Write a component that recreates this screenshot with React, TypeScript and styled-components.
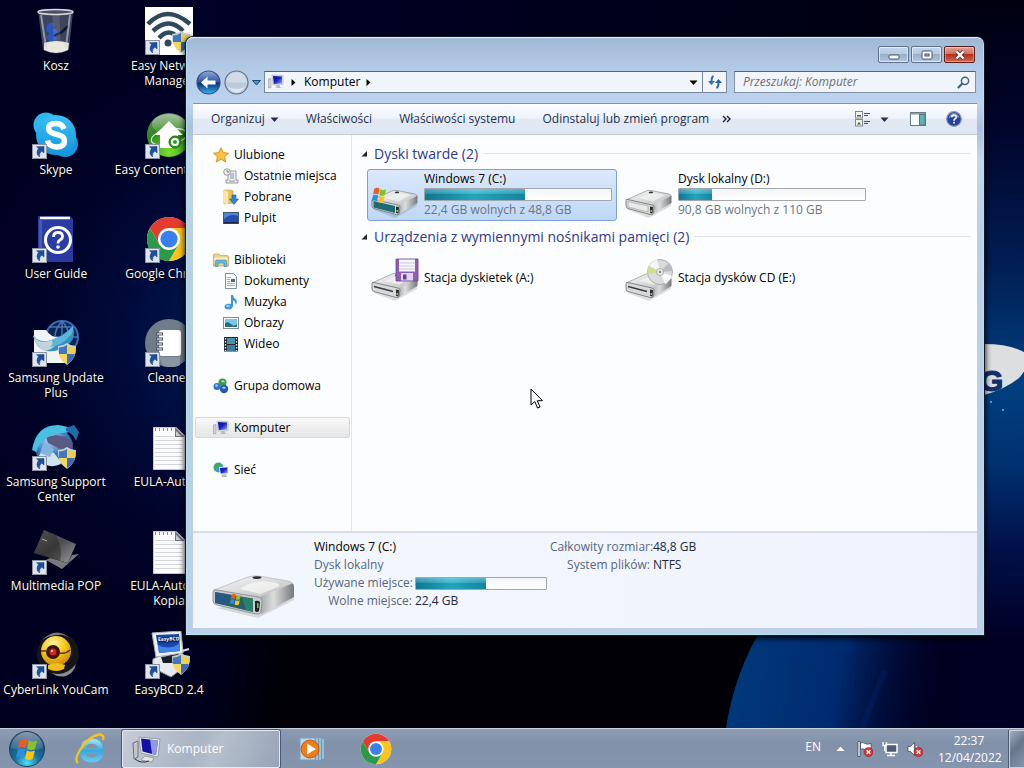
import React from 'react';
import styled, { createGlobalStyle } from 'styled-components';

const GlobalStyle = createGlobalStyle`
  * { box-sizing: border-box; }
  html, body { margin: 0; height: 100%; }
  body {
    font-family: "Segoe UI", "Open Sans", "Noto Sans", sans-serif;
    font-size: 12px;
    line-height: 16px;
    color: #000;
    background: #00001e;
    overflow: hidden;
  }
  #root { height: 100%; }
  button, input { font: inherit; color: inherit; padding: 0; margin: 0; border: 0; background: none; }
  a { color: inherit; text-decoration: none; }
  ul, dl, dd, h1, h2 { margin: 0; padding: 0; font-weight: 400; list-style: none; }
  svg { display: block; flex: none; }
`;

/* ---------- shell ---------- */

const Screen = styled.div`
  display: flex;
  flex-direction: column;
  height: 100vh;
`;

const Desktop = styled.main`
  position: relative;
  flex: 1;
  min-height: 0;
  overflow: hidden;
`;

const Backdrop = styled.div`
  position: absolute;
  inset: 0;
  svg { width: 100%; height: 100%; }
`;

const IconColumns = styled.ul`
  position: relative;
  display: grid;
  grid-auto-flow: column;
  grid-template-rows: repeat(7, 104px);
  grid-auto-columns: 112px;
  column-gap: 1px;
  width: max-content;
  padding-top: 7px;
`;

const Shortcut = styled.button`
  position: relative;
  display: flex;
  flex-direction: column;
  align-items: center;
  gap: 3px;
  width: 100%;
  color: #fff;
  text-align: center;
  line-height: 15px;
  white-space: nowrap;
  text-shadow: 0 1px 2px #000, 0 0 2px #000;
  span { display: block; }
`;

/* ---------- explorer window ---------- */

const Window = styled.section`
  position: absolute;
  top: 37px;
  left: 186px;
  right: 40px;
  bottom: 93px;
  display: flex;
  flex-direction: column;
  padding: 0 6px 6px;
  border: 1px solid #b4e2f2;
  border-top-color: #e9f1f8;
  border-radius: 7px 7px 0 0;
  background: linear-gradient(#a1b9d4, #b3cae6 30px, #bdd3ee 66px, #a9bfdc 90px, #c3d6ea 120px, #b9cfe6 200px, #bcd1e8);
  box-shadow: 0 0 0 1px #11182a, 0 2px 6px 1px #000;
`;

const TitleBar = styled.header`
  display: flex;
  justify-content: flex-end;
  gap: 2px;
  height: 33px;
  padding: 8px 2px 0 0;
`;

const CaptionButton = styled.button<{ $close?: boolean }>`
  display: grid;
  place-items: center;
  width: 31px;
  height: 17px;
  border: 1px solid ${p => (p.$close ? '#5b1c1c' : '#5c6f8c')};
  border-radius: 2px;
  box-shadow: inset 0 0 0 1px rgba(255, 255, 255, ${p => (p.$close ? 0.35 : 0.6)});
  background: ${p =>
    p.$close
      ? 'linear-gradient(#e2a396, #cf6c5b 50%, #b6301c 50%, #d0694c)'
      : 'linear-gradient(#c5d6ea, #b5c9e1 50%, #99b0cd 50%, #b1c8e2)'};
`;

const NavBar = styled.div`
  display: flex;
  align-items: center;
  height: 22px;
  margin-bottom: 10px;
`;

const RoundButton = styled.button`
  width: 25px;
  height: 25px;
  margin-left: 3px;
`;

const HistoryButton = styled.button`
  width: 15px;
  display: grid;
  place-items: center;
`;

const AddressBar = styled.div`
  flex: 1;
  display: flex;
  align-items: center;
  height: 22px;
  padding-left: 3px;
  border: 1px solid #7488a3;
  border-top-color: #4f6079;
  background: #f1f5fb;
`;

const Crumb = styled.button`
  margin: 0 4px 0 2px;
`;

const Spacer = styled.div`
  flex: 1;
`;

const BarButton = styled.button<{ $divided?: boolean }>`
  display: grid;
  place-items: center;
  width: ${p => (p.$divided ? 24 : 18)}px;
  height: 20px;
  border-left: ${p => (p.$divided ? '1px solid #7488a3' : '0')};
`;

const SearchBox = styled.label`
  display: flex;
  align-items: center;
  width: 242px;
  height: 22px;
  margin: 0 1px 0 7px;
  padding: 0 5px 0 8px;
  border: 1px solid #7f93ad;
  border-top-color: #4f6079;
  background: #f1f5fb;
  input {
    flex: 1;
    min-width: 0;
    outline: 0;
    &::placeholder { color: #6d6f74; font-style: italic; opacity: 1; }
  }
`;

const Client = styled.div`
  flex: 1;
  min-height: 0;
  display: flex;
  flex-direction: column;
  border-top: 1px solid #7b92b0;
  background: #fcfdfe;
`;

const CommandBar = styled.div`
  display: flex;
  align-items: center;
  height: 31px;
  flex: none;
  padding: 0 15px 1px 18px;
  color: #22314d;
  border-top: 1px solid #fff;
  border-bottom: 1px solid #c0cbdb;
  background: linear-gradient(#fafcff, #eef3fb 45%, #e2e9f5 50%, #dfe7f4);
`;

const Command = styled.button`
  display: flex;
  align-items: center;
  gap: 5px;
  margin-right: 27px;
  white-space: nowrap;
`;

const OverflowButton = styled.button`
  display: grid;
  place-items: center;
  width: 16px;
  height: 24px;
  margin-left: -18px;
`;

const ToolButton = styled.button`
  display: grid;
  place-items: center;
  height: 24px;
  min-width: 16px;
`;

const ToolGroup = styled.div`
  display: flex;
  align-items: center;
  gap: 18px;
  > button + button { margin-left: 2px; }
`;

const SplitTool = styled.div`
  display: flex;
  gap: 5px;
`;

const Panes = styled.div`
  flex: 1;
  min-height: 0;
  display: flex;
`;

const NavPane = styled.nav`
  flex: none;
  width: 159px;
  padding: 9px 1px 0 2px;
  border-right: 1px solid #dfe7f1;
`;

const NavGroup = styled.ul`
  margin-bottom: 21px;
`;

const NavItem = styled.a<{ $child?: boolean; $selected?: boolean }>`
  display: flex;
  align-items: center;
  gap: 5px;
  height: 21px;
  padding-left: ${p => (p.$child ? 27 : 17)}px;
  white-space: nowrap;
  border: 1px solid ${p => (p.$selected ? '#d9d9d9' : 'transparent')};
  border-radius: 2px;
  background: ${p => (p.$selected ? 'linear-gradient(#f8f8f8, #e6e6e7)' : 'none')};
`;

const FileList = styled.div`
  flex: 1;
  min-width: 0;
  padding: 4px 7px 0 8px;
`;

const GroupHeading = styled.h2`
  display: flex;
  align-items: center;
  gap: 5px;
  height: 30px;
  padding-bottom: 1px;
  font-size: 14px;
  line-height: 20px;
  color: #2f3a8c;
  white-space: nowrap;
  svg { color: #222; }
  &::after {
    content: "";
    flex: 1;
    height: 1px;
    background: #e0e3ea;
  }
`;

const Tiles = styled.div`
  display: flex;
  flex-wrap: wrap;
  gap: 1px 4px;
  padding: 0 0 1px 7px;
`;

const Tile = styled.button<{ $selected?: boolean }>`
  display: flex;
  align-items: center;
  gap: 5px;
  width: 250px;
  height: 52px;
  padding: 0 4px 1px 3px;
  text-align: left;
  border: 1px solid ${p => (p.$selected ? '#7da2ce' : 'transparent')};
  border-radius: 3px;
  background: ${p => (p.$selected ? 'linear-gradient(#dbe9fb, #bfd7f6)' : 'none')};
`;

const TileText = styled.span`
  flex: 1;
  display: flex;
  flex-direction: column;
  gap: 1px;
  white-space: nowrap;
  small { font-size: 12px; color: #6d7580; }
`;

const Gauge = styled.span`
  display: block;
  width: 100%;
  height: 13px;
  border: 1px solid #a2a6ad;
  border-radius: 1px;
  background: linear-gradient(#f4f5f6, #fff);
  i {
    display: block;
    height: 100%;
    background: linear-gradient(rgba(255, 255, 255, 0.3), rgba(255, 255, 255, 0.05) 50%, rgba(0, 60, 80, 0.15) 50%, rgba(0, 40, 60, 0.1)),
      linear-gradient(90deg, #12809c, #2bb4cc 50%, #1590ad);
  }
`;

const DetailsPane = styled.footer`
  flex: none;
  display: flex;
  height: 97px;
  padding: 5px 20px 0 19px;
  gap: 18px;
  border-top: 2px solid #dadde3;
  background: linear-gradient(90deg, #f3f7fd, #f0f3fd);
  svg { margin-top: 32px; }
`;

const Facts = styled.dl`
  display: grid;
  grid-template-columns: 98px 132px 100px auto;
  grid-auto-rows: 18px;
  column-gap: 3px;
  align-items: center;
  align-content: start;
  white-space: nowrap;
  dt { color: #59667b; text-align: right; }
  dd { color: #1b2a44; }
`;

const Subject = styled.dd<{ $dim?: boolean }>`
  grid-column: span 2;
  && { color: ${p => (p.$dim ? '#59667b' : '#000')}; }
`;

const Filler = styled.div`
  grid-column: span 2;
`;

const Cursor = styled.div`
  position: absolute;
  left: 530px;
  top: 388px;
`;

/* ---------- taskbar ---------- */

const Taskbar = styled.footer`
  display: flex;
  align-items: center;
  height: 40px;
  flex: none;
  color: #fff;
  border-top: 1px solid #c3cddb;
  background: linear-gradient(#8e9db2, #8091a9 40%, #8495ad);
  box-shadow: 0 -1px 0 #10151f;
`;

const StartButton = styled.button`
  width: 54px;
  margin-right: 4px;
  display: grid;
  place-items: center;
`;

const Pinned = styled.button`
  width: 64px;
  display: grid;
  place-items: center;
`;

const TaskButton = styled.button`
  display: flex;
  align-items: center;
  gap: 6px;
  width: 158px;
  height: 38px;
  padding-left: 8px;
  border: 1px solid #e4e9ef;
  border-radius: 2px;
  box-shadow: 0 0 0 1px #4b586b;
  background: linear-gradient(115deg, #c6cdd8, #a9b4c4 45%, #b5bfcd 60%, #97a4b7);
`;

const Tray = styled.div`
  display: flex;
  align-items: center;
  gap: 9px;
`;

const TrayButton = styled.button`
  display: grid;
  place-items: center;
  min-width: 16px;
`;

const Language = styled.button`
  margin-right: 2px;
  padding-bottom: 4px;
`;

const Clock = styled.button`
  width: 62px;
  margin-left: 6px;
  line-height: 17px;
  text-align: center;
  white-space: nowrap;
  span { display: block; }
`;

const ShowDesktop = styled.button`
  width: 15px;
  height: 38px;
  border: 1px solid #c7d0dc;
  border-right: 0;
  box-shadow: -1px 0 0 #4b586b;
  background: linear-gradient(135deg, #a0adbd, #66758a 45%, #8695aa);
`;

/* ---------- drawings ---------- */

const Defs = () => (
  <svg width="0" height="0" style={{ position: 'absolute' }} aria-hidden="true">
    <defs>
      <linearGradient id="metal" x1="0" y1="0" x2="1" y2="1">
        <stop offset="0" stopColor="#fafafa" />
        <stop offset="1" stopColor="#b9babc" />
      </linearGradient>
      <linearGradient id="metalSide" x1="0" y1="0" x2="1" y2="0">
        <stop offset="0" stopColor="#a5a6a8" />
        <stop offset="0.4" stopColor="#dcdddd" />
        <stop offset="1" stopColor="#77787b" />
      </linearGradient>
      <linearGradient id="screenBlue" x1="0" y1="0" x2="1" y2="1">
        <stop offset="0" stopColor="#0a0a90" />
        <stop offset="0.5" stopColor="#1b22c4" />
        <stop offset="1" stopColor="#8fb2f0" />
      </linearGradient>
      <radialGradient id="orb" cx="0.5" cy="0.9" r="0.9">
        <stop offset="0" stopColor="#4be0f5" />
        <stop offset="0.4" stopColor="#15709c" />
        <stop offset="1" stopColor="#1b3e63" />
      </radialGradient>
      <linearGradient id="gloss" x1="0" y1="0" x2="0" y2="1">
        <stop offset="0" stopColor="#fff" stopOpacity="0.85" />
        <stop offset="1" stopColor="#fff" stopOpacity="0.15" />
      </linearGradient>
      <linearGradient id="backBlue" x1="0" y1="0" x2="0" y2="1">
        <stop offset="0" stopColor="#8fa9dc" />
        <stop offset="0.48" stopColor="#2f55ac" />
        <stop offset="0.52" stopColor="#0c2a7c" />
        <stop offset="1" stopColor="#2fb9ee" />
      </linearGradient>
      <linearGradient id="skyBall" x1="0" y1="0" x2="0" y2="1">
        <stop offset="0" stopColor="#39c0f4" />
        <stop offset="1" stopColor="#1596dd" />
      </linearGradient>
      <radialGradient id="greenBall" cx="0.5" cy="0.9" r="0.9">
        <stop offset="0" stopColor="#7be02c" />
        <stop offset="0.6" stopColor="#2f8a1c" />
        <stop offset="1" stopColor="#5c8a52" />
      </radialGradient>
      <radialGradient id="globe" cx="0.4" cy="0.3" r="0.8">
        <stop offset="0" stopColor="#b5dbf4" />
        <stop offset="0.5" stopColor="#3f7dc2" />
        <stop offset="1" stopColor="#1c3c7c" />
      </radialGradient>
      <radialGradient id="yolk" cx="0.4" cy="0.25" r="0.8">
        <stop offset="0" stopColor="#fff3a0" />
        <stop offset="0.5" stopColor="#f8c81c" />
        <stop offset="1" stopColor="#c67f05" />
      </radialGradient>
      <linearGradient id="laptop" x1="0" y1="0" x2="1" y2="1">
        <stop offset="0" stopColor="#7b7b7b" />
        <stop offset="0.5" stopColor="#4b4b4b" />
        <stop offset="1" stopColor="#9a9a9a" />
      </linearGradient>
      <linearGradient id="fold" x1="0" y1="0" x2="1" y2="0">
        <stop offset="0" stopColor="#f6dd85" />
        <stop offset="1" stopColor="#e2b545" />
      </linearGradient>
      <linearGradient id="ie" x1="0" y1="0" x2="0" y2="1">
        <stop offset="0" stopColor="#8fe0f8" />
        <stop offset="0.5" stopColor="#35a9e0" />
        <stop offset="1" stopColor="#5cc8f0" />
      </linearGradient>
    </defs>
  </svg>
);

const Wallpaper = () => (
  <svg viewBox="0 0 1024 728" preserveAspectRatio="xMidYMid slice" aria-hidden="true">
    <defs>
      <radialGradient id="wpLeft" gradientUnits="userSpaceOnUse" cx="260" cy="340" r="330">
        <stop offset="0" stopColor="#02205a" />
        <stop offset="0.4" stopColor="#000b3c" />
        <stop offset="1" stopColor="#000022" stopOpacity="0" />
      </radialGradient>
      <linearGradient id="wpRight" gradientUnits="userSpaceOnUse" x1="0" y1="0" x2="0" y2="640">
        <stop offset="0" stopColor="#00000f" />
        <stop offset="0.2" stopColor="#00052c" />
        <stop offset="0.4" stopColor="#001c50" />
        <stop offset="0.6" stopColor="#00407f" />
        <stop offset="0.72" stopColor="#003272" />
        <stop offset="0.86" stopColor="#001048" />
        <stop offset="1" stopColor="#000024" />
      </linearGradient>
      <linearGradient id="wpArc" gradientUnits="userSpaceOnUse" x1="730" y1="650" x2="950" y2="690">
        <stop offset="0" stopColor="#003a7c" />
        <stop offset="0.5" stopColor="#002a70" />
        <stop offset="1" stopColor="#000028" stopOpacity="0" />
      </linearGradient>
      <linearGradient id="wpDark" gradientUnits="userSpaceOnUse" x1="190" y1="640" x2="290" y2="660">
        <stop offset="0" stopColor="#000010" stopOpacity="0" />
        <stop offset="1" stopColor="#000006" />
      </linearGradient>
      <linearGradient id="wpTop" gradientUnits="userSpaceOnUse" x1="190" y1="0" x2="1024" y2="0">
        <stop offset="0" stopColor="#000028" />
        <stop offset="1" stopColor="#00000f" />
      </linearGradient>
    </defs>
    <rect width="1024" height="728" fill="#000020" />
    <rect width="1024" height="728" fill="url(#wpLeft)" />
    <rect x="190" width="834" height="60" fill="url(#wpTop)" />
    <rect x="180" y="600" width="640" height="128" fill="url(#wpDark)" />
    <rect x="960" width="64" height="728" fill="url(#wpRight)" />
    <path d="M780 600Q736 660 726 728H960V600Z" fill="url(#wpArc)" />
    <path d="M862 728L885 670" stroke="#0b3c9a" strokeWidth="6" opacity="0.15" fill="none" />
    <path d="M900 344H984Q1010 344 1024 352Q1032 362 1020 377Q1008 388 984 395H900Z" fill="#dcdee0" />
    <text x="980" y="391" fontFamily="Liberation Sans Narrow, Liberation Sans, sans-serif" fontWeight="700" fontSize="30" fill="#123068" stroke="#123068">G</text>
    <circle cx="991" cy="402" r="1" fill="#7fb4e8" />
    <circle cx="1003" cy="410" r="1" fill="#7fb4e8" />
  </svg>
);

const Shield = ({ x, y, s = 1 }: { x: number; y: number; s?: number }) => (
  <g transform={`translate(${x} ${y}) scale(${s})`}>
    <path d="M10 0Q14 3 19 3Q20 15 10 22Q0 15 1 3Q6 3 10 0Z" fill="#c9ced4" />
    <path d="M10 2V11H2Q2 7 2 4.500Q6 4.500 10 2Z" fill="#3f78c0" />
    <path d="M10 2V11H18Q18 7 18 4.500Q14 4.500 10 2Z" fill="#f2cf4a" />
    <path d="M10 11H2.200Q3 17 10 21Z" fill="#f6d95c" />
    <path d="M10 11H17.800Q17 17 10 21Z" fill="#3a6db4" />
  </g>
);

const LinkArrow = () => (
  <g transform="translate(0 33)">
    <rect x="0.500" y="0.500" width="14" height="14" fill="#dde4ee" stroke="#8d949e" />
    <path d="M12 2.500V9L9.800 7Q7 9 7.500 13Q3 9.500 6.500 4.600L4.500 2.800Z" fill="#1d4f9c" stroke="#123a7c" strokeWidth="0.500" />
  </g>
);

const ChromeMark = () => (
  <g>
    <circle cx="24" cy="24" r="22" fill="#fff" />
    <path d="M24 24L4.950 13A22 22 0 0 1 43.050 13H24Z" fill="#e33b2e" />
    <path d="M43.050 13A22 22 0 0 1 24 46L33.500 29.500L24 13Z" fill="#fcc51b" />
    <path d="M24 46A22 22 0 0 1 4.950 13L14.500 29.500L33.500 29.500Z" fill="#2a9a48" />
    <path d="M4.950 13L14.500 29.500L24 13Z" fill="#e33b2e" />
    <circle cx="24" cy="24" r="11" fill="#fff" />
    <circle cx="24" cy="24" r="8.600" fill="#3a7ff0" />
  </g>
);

const Flag = ({ x, y, s }: { x: number; y: number; s: number }) => (
  <g transform={`translate(${x} ${y}) scale(${s})`}>
    <path d="M3 1Q7 -1.500 10 0.800L8.500 8.500Q5 6.500 1.500 8.500Z" fill="#ee5a24" />
    <path d="M11.200 1.500Q15 3.500 19 1.500L17.200 9.200Q13.500 11 9.800 9.200Z" fill="#8ac02c" />
    <path d="M1.200 10Q5 8 8.200 10L6.600 17.500Q3 15.500 -0.500 17.500Z" fill="#2c8ee0" />
    <path d="M9.500 10.700Q13 12.500 17 10.700L15 18.500Q11.500 20.200 7.900 18.500Z" fill="#fbc416" />
  </g>
);

const BinIcon = () => (
  <>
    <path d="M6 4Q24 0 41 4L37 43Q24 50 11 43Z" fill="#7c8496" opacity="0.5" />
    <path d="M12 36Q24 32 37 36L36 43Q24 49 12 43Z" fill="#e9e7de" />
    <path d="M15 18Q19 14 22 17L20 22Q25 21 26 25L23 28L25 32Q20 36 16 33L14 30L18 26Q12 25 15 18Z" fill="#2756c0" />
    <path d="M22 29L30 25L36 19" stroke="#0d1630" strokeWidth="2.500" fill="none" />
    <path d="M9 8L14 40M38 8L34 40" stroke="#c9d0dc" strokeWidth="2" opacity="0.6" />
    <path d="M24 8L25 34" stroke="#dfe4ee" strokeWidth="7" opacity="0.15" />
    <ellipse cx="23.500" cy="5" rx="17.500" ry="2.500" fill="#4a5163" stroke="#d7dce4" strokeWidth="1.500" />
  </>
);

const SkypeIcon = () => (
  <>
    <circle cx="14" cy="14" r="12.500" fill="#2fb6f0" />
    <circle cx="33" cy="33" r="13" fill="#1797dd" />
    <circle cx="24" cy="24" r="20" fill="url(#skyBall)" />
    <path d="M32 18Q30 12.500 24 12.500Q16.500 12.500 16.500 17.500Q16.500 21.500 24 23.200Q32.500 25 32.500 29.500Q32.500 36 24.500 36Q17 36 15.500 29.500" stroke="#fff" strokeWidth="5.500" fill="none" />
  </>
);

const GuideIcon = () => (
  <>
    <path d="M6 1H38L41 4V47H10L6 44Z" fill="#2a3ba4" />
    <path d="M8 3H38" stroke="#fff" strokeWidth="2.500" />
    <path d="M7 4H10V46L7 44Z" fill="#4558be" />
    <circle cx="26" cy="25" r="12.500" fill="none" stroke="#fff" strokeWidth="3" />
    <path d="M21.500 22Q21.500 17.500 26 17.500Q30.500 17.500 30.500 21.300Q30.500 24 27.500 25.300Q26 26 26 28.500" stroke="#fff" strokeWidth="2.800" fill="none" />
    <circle cx="26" cy="32" r="1.800" fill="#fff" />
  </>
);

const UpdateIcon = () => (
  <>
    <circle cx="30" cy="18" r="16" fill="#0b2350" stroke="#3b6bb4" strokeWidth="2" />
    <path d="M14 18H46M18 8H42M30 2V34M30 2Q16 18 30 34Q44 18 30 2" stroke="#4674b8" strokeWidth="1.500" fill="none" />
    <path d="M2 11H14Q20 20 30 18L34 26V44H2Z" fill="#f1f3f4" />
    <path d="M1 16Q8 26 22 20Q32 16 41 7Q44 18 38 24Q28 34 14 32Q4 30 1 16Z" fill="#2f92c0" />
    <path d="M1 16Q6 26 20 21L28 18Q26 28 14 32Q4 30 1 16Z" fill="#c3d3da" />
    <path d="M20 21Q32 18 41 7Q42 14 36 19Q30 26 18 28Q22 25 20 21Z" fill="#5cb6da" />
    <Shield x={25} y={24} />
  </>
);

const SupportIcon = () => (
  <>
    <circle cx="22" cy="24" r="19" fill="url(#globe)" />
    <path d="M14 14L24 12L34 14L41 20L38 28L30 27L24 24L16 20Z" fill="#5a5b82" />
    <path d="M6 36Q8 24 22 30L30 40Q18 48 6 36Z" fill="#cfe4f2" />
    <path d="M12 20L22 26L18 34L8 30Z" fill="#86b4e0" />
    <path d="M0 27Q4 2 26 2Q36 3 40 7Q38 10 30 10Q10 12 4 29Z" fill="#49bfe2" />
    <path d="M34 5L42 2L47 9L44 18Q41 10 34 8Z" fill="#1f6da6" />
    <Shield x={25} y={24} />
  </>
);

const LaptopIcon = () => (
  <>
    <path d="M12 3L44 17L36 36L2 26Z" fill="url(#laptop)" />
    <path d="M12 3L24 8Q31 22 28 34L2 26Z" fill="#1f1f1f" opacity="0.45" />
    <path d="M36 36L40 28L47 27L30 42L14 33L18 31Z" fill="#77797b" />
    <path d="M10 12L15 14" stroke="#b0b0b0" strokeWidth="1" />
  </>
);

const CamIcon = () => (
  <>
    <circle cx="26" cy="23" r="21" fill="#16161a" />
    <path d="M9 10Q24 -6 39 8Q32 3 26 4Q16 4 9 10Z" fill="#77797c" />
    <path d="M20 42Q34 46 44 33Q42 42 34 45Q26 47 20 42Z" fill="#8a8c90" />
    <circle cx="24" cy="20" r="15" fill="url(#yolk)" />
    <path d="M16 34Q24 30 33 34L32 38Q24 42 16 38Z" fill="#f0bb1c" />
    <path d="M9 20H14M28 22Q34 23 38 19" stroke="#5a3802" strokeWidth="1.500" fill="none" />
    <circle cx="21" cy="21" r="7" fill="#3a1509" />
    <circle cx="21" cy="21" r="3.500" fill="#d62222" />
    <circle cx="20" cy="20" r="1.200" fill="#ffb4a0" />
  </>
);

const WifiIcon = () => (
  <>
    <rect width="48" height="48" fill="#fff" />
    <path d="M3 17Q22 -3 45 17" stroke="#2c4a5c" strokeWidth="4.500" fill="none" />
    <path d="M8 24Q24 9 38 24" stroke="#2c4a5c" strokeWidth="4.500" fill="none" />
    <path d="M14 31Q24 20 33 31" stroke="#2c4a5c" strokeWidth="4.500" fill="none" />
    <circle cx="23" cy="36" r="3.500" fill="#2c4a5c" />
    <Shield x={26} y={24} />
  </>
);

const ShareIcon = () => (
  <>
    <circle cx="24" cy="24" r="22" fill="url(#greenBall)" />
    <ellipse cx="24" cy="13" rx="17" ry="10" fill="url(#gloss)" opacity="0.55" />
    <ellipse cx="24" cy="26" rx="18" ry="8" fill="none" stroke="#dff0d8" strokeWidth="1.200" transform="rotate(-12 24 26)" />
    <path d="M24 10L38 24H33V37H15V24H10Z" fill="#fff" />
    <circle cx="30" cy="31" r="6" fill="#2f9a1e" stroke="#1c6a12" strokeWidth="1" />
    <circle cx="30" cy="31" r="3" fill="none" stroke="#fff" strokeWidth="2" />
    <path d="M34 27L44 22" stroke="#256f18" strokeWidth="2.500" />
  </>
);

const CleanerIcon = () => (
  <>
    <circle cx="24" cy="24" r="24" fill="#6f7c8a" />
    <path d="M14 38L35 38L35 46Q28 50 18 47Z" fill="#8b96a2" />
    <rect x="14" y="11" width="22" height="26" rx="3" fill="#fff" />
    <path d="M11 15H18M11 20H18M11 25H18M11 30H18" stroke="#4c5763" strokeWidth="3" />
    <path d="M12 15H17M12 20H17M12 25H17M12 30H17" stroke="#fff" strokeWidth="1.200" />
  </>
);

const NoteIcon = () => (
  <>
    <path d="M8.500 4.500H31L40.500 13.500V46.500H8.500Z" fill="#fbfbfd" stroke="#c5c9cf" />
    <path d="M30 4V14H40Z" fill="#70767e" />
    <path d="M31 8V13H36Z" fill="#c9ced5" />
    <path d="M10 13.500H29M10 17.500H38M10 21.500H38M10 25.500H38M10 29.500H38M10 33.500H38M10 37.500H38M10 41.500H38" stroke="#d3d7dd" />
    <path d="M10 6.500H29" stroke="#8a9098" strokeWidth="3" strokeDasharray="1 3" />
  </>
);

const BcdIcon = () => (
  <>
    <path d="M8 28Q6 36 14 40L26 46L34 40L30 26L16 24Z" fill="#e7eaee" stroke="#8b9099" />
    <path d="M16 26L30 24V32H18Z" fill="#1a1d26" />
    <path d="M7 2L36 0L38 22L11 26Z" fill="#eef0f2" stroke="#aab0b8" />
    <path d="M11 4L34 3L35 20L14 22Z" fill="#1747b0" />
    <path d="M14 22L35 20L35 12Q24 20 13 14Z" fill="#3f86e6" />
    <text x="13" y="10" fontSize="5" fontWeight="700" fill="#fff" transform="rotate(-2 13 10)">EasyBCD</text>
    <path d="M37 20L44 18" stroke="#d6d9de" strokeWidth="2" />
    <Shield x={26} y={22} />
  </>
);

const Drive = ({ kind }: { kind: 'system' | 'plain' | 'floppy' | 'cd' }) => (
  <svg width="48" height="48" viewBox="0 0 48 48" aria-hidden="true">
    <path d="M3 39L24 47L46 35V31L3 35Z" fill="#000" opacity="0.12" />
    <path d="M1 29L21 20Q23 19 26 19.500L44 23Q47 24 46 26L27 36Z" fill="url(#metal)" stroke="#8f9194" strokeWidth="0.700" />
    <path d="M26 35L46 25Q47 25 46.500 27V32L28 43Z" fill="url(#metalSide)" />
    <path d="M1 29.500Q1 28 3 28.500L27 34Q29 34.500 29 36L28 43Q27 44 25 43.500L3 37.500Q1 37 1 35Z" fill="#d8d9da" stroke="#6c6e71" strokeWidth="0.800" />
    <path d="M14 27L27 21.500L40 24L28 30.500Z" fill="#fff" opacity="0.5" />
    <ellipse cx="26" cy="21.400" rx="2.200" ry="0.900" fill="#333" />
    {kind === 'floppy' || kind === 'cd' ? (
      <path d="M3 32.500L22 37.500" stroke="#3a3c3f" strokeWidth="1.600" />
    ) : kind === 'plain' ? (
      <path d="M3 30.500L23 35V41L3 36Z" fill="#e9eaea" stroke="#9b9da0" strokeWidth="0.600" />
    ) : (
      <path d="M2.500 30L24 35V42L2.500 36.500Z" fill="#1f6a74" />
    )}
    <path d="M25 35.500L28 36L27.500 42.500L25 42Z" fill="#2c2e30" />
    <rect x="25.500" y="39" width="1.500" height="2" fill="#5edb3a" />
    {kind === 'floppy' && (
      <g transform="translate(0 4)">
        <path d="M25 1H47V23H25Z" fill="#8e5fb4" stroke="#6a3f92" strokeWidth="0.800" />
        <rect x="28" y="1.500" width="16" height="12" fill="#f7f6fa" />
        <path d="M28 5H44M28 8H44M28 11H44" stroke="#cfc8da" />
        <rect x="30" y="15" width="12" height="7.500" fill="#ddd6e6" />
        <rect x="32" y="16.500" width="3.500" height="5" fill="#6a3f92" />
      </g>
    )}
    {kind === 'cd' && (
      <g transform="translate(0 4)">
        <circle cx="35" cy="14" r="12.500" fill="#d9dbdc" stroke="#9fa3a6" strokeWidth="0.800" />
        <path d="M35 14L24 8Q27 3 32 1.500Z" fill="#f5f7f7" />
        <path d="M35 14L22.500 16Q22 11 24 8Z" fill="#cfe08a" />
        <path d="M35 14L47 18Q44 24 40 26Z" fill="#fafafa" />
        <path d="M35 14L44 5Q47 9 47.500 13Z" fill="#b8bcbf" />
        <circle cx="35" cy="14" r="3.500" fill="#f6f6f6" stroke="#a6a9ac" />
        <circle cx="35" cy="14" r="1.400" fill="#8b8e91" />
      </g>
    )}
    {kind === 'system' && <Flag x={1} y={17} s={0.750} />}
  </svg>
);

const BigDrive = () => (
  <svg width="84" height="48" viewBox="0 0 84 48" aria-hidden="true">
    <path d="M4 38L46 48L82 30V26Z" fill="#000" opacity="0.12" />
    <path d="M2 20L36 7Q42 5 50 6.500L76 11Q81 12 81 15L50 28Z" fill="url(#metal)" stroke="#b4b6b8" strokeWidth="0.700" />
    <path d="M28 19Q40 9 62 12.500Q70 14 66 17L48 24Z" fill="#fff" opacity="0.6" />
    <path d="M48 27L80 13.500Q82 13.500 82 17V27L52 43Q48 45 48 42Z" fill="url(#metalSide)" />
    <path d="M1 22Q1 19 5 20L46 27Q50 28 50 31L49 42Q48 45 44 44L5 35Q1 34 1 31Z" fill="#c9cacb" stroke="#85878a" strokeWidth="0.800" />
    <path d="M3 22L41 28.500V42L3 33Z" fill="#22606e" />
    <path d="M3 22L18 24.500L12 35L3 33Z" fill="#2d4f9a" opacity="0.5" />
    <path d="M30 27L41 29V42L34 40Z" fill="#2f8f68" opacity="0.7" />
    <path d="M43 31Q46 30 48 32L47 41Q45 43 43 41Z" fill="#1d2224" />
    <rect x="45" y="33" width="1.500" height="5" fill="#5edb3a" />
    <ellipse cx="45" cy="7.600" rx="4.500" ry="1.400" fill="#2d2d2f" />
    <Flag x={18} y={24} s={0.580} />
  </svg>
);

const ComputerIcon = () => (
  <svg width="16" height="16" viewBox="0 0 16 16" aria-hidden="true">
    <path d="M0.500 5L3 4.500V13.500L0.500 14Z" fill="#d4d8dc" stroke="#83898f" strokeWidth="0.500" />
    <path d="M4 1L15 1.500V10.500L5 11Z" fill="#dfe3ea" stroke="#9da4ae" strokeWidth="0.500" />
    <path d="M5 2L14 2.500V9.500L5.800 10Z" fill="url(#screenBlue)" />
    <path d="M8.500 11H11.500L12 13L14 14H7L8.500 13Z" fill="#b5bac1" />
  </svg>
);

const TaskComputerIcon = () => (
  <svg width="30" height="30" viewBox="0 0 30 30" aria-hidden="true">
    <path d="M2 9L7 7V23L3 25Z" fill="#c3c7cc" stroke="#6c7178" />
    <path d="M8 3L29 5L27 23L10 19Z" fill="#e6e8ea" stroke="#8a8f96" strokeWidth="0.800" />
    <path d="M10 4.500L27 6.500L25 21L11.500 17.500Z" fill="#1310a8" />
    <path d="M19 5.500L27 6.500L25 21L21 19.800Z" fill="#b9c8f0" opacity="0.75" />
    <path d="M14 22L23 24L21 28L10 26Z" fill="#e3e5e7" stroke="#84888e" strokeWidth="0.700" />
    <path d="M4 25Q10 30 18 27" stroke="#2f3236" fill="none" />
  </svg>
);

const NavIcon = ({ name }: { name: string }) => {
  if (name === 'computer') return <ComputerIcon />;
  return (
    <svg width="16" height="16" viewBox="0 0 16 16" aria-hidden="true">
      {name === 'star' && (
        <path d="M8 0.800L10.200 5.600L15.500 6.200L11.600 9.700L12.700 15L8 12.300L3.300 15L4.400 9.700L0.500 6.200L5.800 5.600Z" fill="#fbc33a" stroke="#d98a1c" strokeWidth="0.900" />
      )}
      {name === 'recent' && (
        <>
          <path d="M5 3H13V12H15V15H3L3 12H5Z" fill="#eceef0" stroke="#8a9098" strokeWidth="0.900" />
          <path d="M7 6H11M7 8H11M7 10H11M6 13H12" stroke="#8f959c" />
          <circle cx="4" cy="4" r="3.300" fill="#f6f7f8" stroke="#8a9098" strokeWidth="0.900" />
          <path d="M4 2V4H6" stroke="#555" strokeWidth="0.800" fill="none" />
        </>
      )}
      {name === 'downloads' && (
        <>
          <path d="M1 1H8L10 2V14L1 15Z" fill="url(#fold)" stroke="#cf9f38" strokeWidth="0.600" />
          <path d="M1 1L5 3V15.500L1 14Z" fill="#f8e7a6" />
          <path d="M9 6H13V10H15.500L11 15.500L6.500 10H9Z" fill="#2f86d8" stroke="#1b5ca6" strokeWidth="0.600" />
        </>
      )}
      {name === 'desktop' && (
        <>
          <rect x="0.500" y="2.500" width="15" height="11" fill="#1f50b4" stroke="#47526b" />
          <path d="M1 9Q8 3 15 6V3H1Z" fill="#5b93e4" opacity="0.8" />
          <rect x="1" y="12" width="14" height="1.500" fill="#202a44" />
        </>
      )}
      {name === 'libraries' && (
        <>
          <path d="M0.500 3Q0.500 2 2 2H6L7 3.500H14Q15.500 3.500 15.500 5V14H0.500Z" fill="#ecd387" stroke="#c2a04c" strokeWidth="0.700" />
          <path d="M1.500 5.500H14.500V8H1.500Z" fill="#fbf5d6" />
          <path d="M3 8H13L14 14.500H11V11H5V14.500H2Z" fill="#6cb8dd" stroke="#3d86b4" strokeWidth="0.600" />
        </>
      )}
      {name === 'documents' && (
        <>
          <path d="M2.500 0.500H10.500L13.500 3.500V15.500H2.500Z" fill="#fbfcfd" stroke="#858d96" />
          <path d="M4 4.500H8M4 6.500H7M4 8.500H7M4 12.500H12M4 10.500H12" stroke="#a3abb5" />
          <rect x="8" y="6" width="4" height="3" fill="#4e6478" />
        </>
      )}
      {name === 'music' && (
        <>
          <path d="M8 1H10Q10.500 4 13 5.500Q15 8 12.500 11Q13 7 10 6.500V12Q9.500 15.300 5.500 15.500Q1.500 15.500 1.500 12.500Q2 10 5.500 9.800L8 10Z" fill="#3b97dc" />
          <ellipse cx="5" cy="12" rx="2" ry="1.200" fill="#8cd0f5" />
        </>
      )}
      {name === 'pictures' && (
        <>
          <rect x="0.500" y="2.500" width="15" height="11" fill="#fdfdfd" stroke="#848c95" />
          <rect x="2" y="4" width="12" height="8" fill="#7cc6ec" />
          <path d="M2 8Q5 6 8 9T14 9V12H2Z" fill="#23717a" />
        </>
      )}
      {name === 'videos' && (
        <>
          <rect x="1" y="1" width="14" height="14.500" fill="#23282e" />
          <rect x="4" y="2" width="8" height="6" fill="#4f8fb0" />
          <rect x="4" y="9" width="8" height="6" fill="#3f7f9e" />
          <path d="M2.500 2V15M13.500 2V15" stroke="#f0f2f4" strokeWidth="1.300" strokeDasharray="1.500 1.500" />
        </>
      )}
      {name === 'homegroup' && (
        <>
          <circle cx="9.500" cy="4.500" r="4" fill="#3d9a52" />
          <circle cx="4" cy="8.500" r="3.500" fill="#2f74c8" />
          <circle cx="11" cy="11" r="4.200" fill="#2559b0" />
          <path d="M8 3Q10 1 12 4Q9 5 8 3Z" fill="#b6e2ae" />
          <path d="M9 9.500Q11 7.500 13 10Q10 12 9 9.500Z" fill="#93c4f0" />
          <circle cx="3.500" cy="7.500" r="1.200" fill="#a8d0f4" />
        </>
      )}
      {name === 'network' && (
        <>
          <circle cx="5.500" cy="5.500" r="5" fill="#3a9ed0" />
          <path d="M2 3Q5 0 8 2L6 5L3 6L2 9Q0 6 2 3Z" fill="#46a94c" />
          <path d="M6 5L15.500 4.500V12L7 12.500Z" fill="#e2e6ee" />
          <path d="M7 6L14.500 5.500V11L7.800 11.500Z" fill="url(#screenBlue)" />
          <path d="M9 12.500H13L14 15H8.500Z" fill="#b5bac1" />
        </>
      )}
    </svg>
  );
};

const Triangle = ({ dir }: { dir: 'right' | 'down' | 'up' | 'corner' }) => (
  <svg width="9" height="9" viewBox="0 0 9 9" aria-hidden="true" fill="currentColor">
    {dir === 'right' && <path d="M2.500 1L6.500 4.500L2.500 8Z" />}
    {dir === 'down' && <path d="M0.500 2.500H8.500L4.500 7Z" />}
    {dir === 'up' && <path d="M0.500 7L4.500 2.500L8.500 7Z" />}
    {dir === 'corner' && <path d="M7 2V7.500H1.500Z" />}
  </svg>
);

const RedCross = () => (
  <>
    <circle cx="11.500" cy="11" r="4.500" fill="#d63a3a" stroke="#8f1f1f" strokeWidth="0.600" />
    <path d="M9.700 9.200L13.300 12.800M13.300 9.200L9.700 12.800" stroke="#fff" strokeWidth="1.400" />
  </>
);

/* ---------- data ---------- */

type DeskItem = { lines: string[]; art: React.ReactNode; link?: boolean };

const deskItems: DeskItem[] = [
  { lines: ['Kosz'], art: <BinIcon /> },
  { lines: ['Skype'], art: <SkypeIcon />, link: true },
  { lines: ['User Guide'], art: <GuideIcon />, link: true },
  { lines: ['Samsung Update', 'Plus'], art: <UpdateIcon />, link: true },
  { lines: ['Samsung Support', 'Center'], art: <SupportIcon />, link: true },
  { lines: ['Multimedia POP'], art: <LaptopIcon />, link: true },
  { lines: ['CyberLink YouCam'], art: <CamIcon />, link: true },
  { lines: ['Easy Network', 'Manager'], art: <WifiIcon />, link: true },
  { lines: ['Easy Content Share'], art: <ShareIcon />, link: true },
  { lines: ['Google Chrome'], art: <ChromeMark />, link: true },
  { lines: ['Cleaner'], art: <CleanerIcon />, link: true },
  { lines: ['EULA-Autom'], art: <NoteIcon /> },
  { lines: ['EULA-Autom -', 'Kopia'], art: <NoteIcon /> },
  { lines: ['EasyBCD 2.4'], art: <BcdIcon />, link: true },
];

type NavEntry = { label: string; icon: string; selected?: boolean };

const navGroups: NavEntry[][] = [
  [
    { label: 'Ulubione', icon: 'star' },
    { label: 'Ostatnie miejsca', icon: 'recent' },
    { label: 'Pobrane', icon: 'downloads' },
    { label: 'Pulpit', icon: 'desktop' },
  ],
  [
    { label: 'Biblioteki', icon: 'libraries' },
    { label: 'Dokumenty', icon: 'documents' },
    { label: 'Muzyka', icon: 'music' },
    { label: 'Obrazy', icon: 'pictures' },
    { label: 'Wideo', icon: 'videos' },
  ],
  [{ label: 'Grupa domowa', icon: 'homegroup' }],
  [{ label: 'Komputer', icon: 'computer', selected: true }],
  [{ label: 'Sieć', icon: 'network' }],
];

const UsageBar = ({ used, label }: { used: number; label: string }) => (
  <Gauge role="meter" aria-label={label} aria-valuenow={used} aria-valuemin={0} aria-valuemax={100}>
    <i style={{ width: `${used}%` }} />
  </Gauge>
);

export default function App() {
  return (
    <Screen>
      <GlobalStyle />
      <Defs />
      <Desktop>
        <Backdrop><Wallpaper /></Backdrop>
        <IconColumns>
          {deskItems.map(item => (
            <li key={item.lines.join(' ')}>
              <Shortcut type="button">
                <svg width="48" height="48" viewBox="0 0 48 48" aria-hidden="true">
                  {item.art}
                  {item.link && <LinkArrow />}
                </svg>
                <span>{item.lines.map(line => <span key={line}>{line}</span>)}</span>
              </Shortcut>
            </li>
          ))}
        </IconColumns>

        <Window aria-label="Komputer">
          <TitleBar>
            <CaptionButton type="button" aria-label="Minimalizuj">
              <svg width="12" height="10" viewBox="0 0 12 10"><rect x="1" y="5" width="10" height="4" rx="1" fill="#fff" stroke="#46536a" /></svg>
            </CaptionButton>
            <CaptionButton type="button" aria-label="Przywróć">
              <svg width="12" height="10" viewBox="0 0 12 10"><rect x="1" y="1" width="10" height="8" rx="1" fill="#fff" stroke="#46536a" /><rect x="4" y="4" width="4" height="2" fill="#a9bdd6" stroke="#46536a" /></svg>
            </CaptionButton>
            <CaptionButton type="button" $close aria-label="Zamknij">
              <svg width="12" height="10" viewBox="0 0 12 10"><path d="M2.500 1.500L9.500 8.500M9.500 1.500L2.500 8.500" stroke="#5a3038" strokeWidth="4" /><path d="M2.500 1.500L9.500 8.500M9.500 1.500L2.500 8.500" stroke="#fff" strokeWidth="2.400" /></svg>
            </CaptionButton>
          </TitleBar>

          <NavBar>
            <RoundButton type="button" aria-label="Wstecz">
              <svg width="25" height="25" viewBox="0 0 25 25">
                <circle cx="12.500" cy="12.500" r="11.500" fill="url(#backBlue)" stroke="#3b4d75" strokeWidth="1.200" />
                <path d="M5 12.500L11.500 6.500V10.500H19.500V14.500H11.500V18.500Z" fill="#fff" />
              </svg>
            </RoundButton>
            <RoundButton type="button" aria-label="Dalej">
              <svg width="25" height="25" viewBox="0 0 25 25">
                <circle cx="12.500" cy="12.500" r="11.500" fill="#bccbdc" stroke="#65748b" strokeWidth="1.200" />
                <path d="M2 12.500A10.500 10.500 0 0 1 23 12.500Z" fill="#d0dbe8" />
                <path d="M4 17Q12.500 28 21 17Q12.500 21 4 17Z" fill="#dfe8f1" />
              </svg>
            </RoundButton>
            <HistoryButton type="button" aria-label="Ostatnie lokalizacje">
              <svg width="9" height="9" viewBox="0 0 9 9"><path d="M0.500 2.500H8.500L4.500 7Z" fill="#4a97c8" stroke="#1c4a74" /></svg>
            </HistoryButton>
            <AddressBar>
              <ComputerIcon />
              <BarButton type="button" aria-label="Foldery"><Triangle dir="right" /></BarButton>
              <Crumb type="button">Komputer</Crumb>
              <Triangle dir="right" />
              <Spacer />
              <BarButton type="button" aria-label="Poprzednie lokalizacje"><Triangle dir="down" /></BarButton>
              <BarButton type="button" $divided aria-label="Odśwież">
                <svg width="14" height="14" viewBox="0 0 14 14">
                  <path d="M5.500 1Q3.500 2 3.500 7" stroke="#2f6fb4" strokeWidth="2" fill="none" />
                  <path d="M0 6H7L3.500 10Z" fill="#2f6fb4" />
                  <path d="M8.500 13Q10.500 12 10.500 7" stroke="#2a62a6" strokeWidth="2" fill="none" />
                  <path d="M7 8H14L10.500 4Z" fill="#2a62a6" />
                </svg>
              </BarButton>
            </AddressBar>
            <SearchBox>
              <input type="text" placeholder="Przeszukaj: Komputer" aria-label="Przeszukaj: Komputer" />
              <svg width="13" height="13" viewBox="0 0 13 13" aria-hidden="true">
                <circle cx="8" cy="4.800" r="3.600" fill="#eef7fc" stroke="#3c6384" strokeWidth="1.500" />
                <path d="M5.300 7.500L1 12" stroke="#3c6384" strokeWidth="2.200" />
              </svg>
            </SearchBox>
          </NavBar>

          <Client>
            <CommandBar>
              <Command type="button">Organizuj <Triangle dir="down" /></Command>
              <Command type="button">Właściwości</Command>
              <Command type="button">Właściwości systemu</Command>
              <Command type="button">Odinstaluj lub zmień program</Command>
              <OverflowButton type="button" aria-label="Więcej">
                <svg width="9" height="8" viewBox="0 0 9 8"><path d="M1 1L4 4L1 7M5 1L8 4L5 7" stroke="#1b2435" strokeWidth="1.400" fill="none" /></svg>
              </OverflowButton>
              <Spacer />
              <ToolGroup>
                <SplitTool>
                  <ToolButton type="button" aria-label="Zmień widok">
                    <svg width="16" height="16" viewBox="0 0 16 16">
                      <rect x="0.500" y="0.500" width="7" height="6.500" fill="#f8faf8" stroke="#7f8790" />
                      <rect x="0.500" y="8.500" width="7" height="6.500" fill="#f3f6dc" stroke="#7f8790" />
                      <path d="M2 5.500V4H6V5.500ZM2 13.500L4 11L6 13.500Z" fill="#3d5c52" />
                      <path d="M9 2.500H15M9 4.500H13M9 10.500H15M9 12.500H13" stroke="#4a5260" />
                    </svg>
                  </ToolButton>
                  <ToolButton type="button" aria-label="Więcej opcji"><Triangle dir="down" /></ToolButton>
                </SplitTool>
                <ToolButton type="button" aria-label="Okienko podglądu">
                  <svg width="16" height="14" viewBox="0 0 16 14">
                    <rect x="0.500" y="0.500" width="15" height="13" fill="#fcfdfd" stroke="#6b7a82" />
                    <rect x="1" y="1" width="14" height="1.500" fill="#8ea0a8" />
                    <rect x="9.500" y="2.500" width="5.500" height="10.500" fill="#5fb3ae" stroke="#4b7a80" />
                  </svg>
                </ToolButton>
                <ToolButton type="button" aria-label="Pomoc">
                  <svg width="16" height="16" viewBox="0 0 16 16">
                    <circle cx="8" cy="8" r="7.300" fill="#2342a4" stroke="#8b96ad" strokeWidth="1.200" />
                    <path d="M2.500 7Q4 2 8 2T13.500 7Q8 5 2.500 7Z" fill="#a9bbe8" opacity="0.6" />
                    <path d="M5.800 6.300Q5.800 4 8 4T10.200 6Q10.200 7.400 8.800 8Q8 8.500 8 9.800" stroke="#fff" strokeWidth="1.600" fill="none" />
                    <rect x="7.200" y="10.800" width="1.700" height="1.700" fill="#fff" />
                  </svg>
                </ToolButton>
              </ToolGroup>
            </CommandBar>

            <Panes>
              <NavPane aria-label="Okienko nawigacji">
                {navGroups.map(group => (
                  <NavGroup key={group[0].label}>
                    {group.map((entry, i) => (
                      <li key={entry.label}>
                        <NavItem href="#" $child={i > 0} $selected={entry.selected}>
                          <NavIcon name={entry.icon} />
                          {entry.label}
                        </NavItem>
                      </li>
                    ))}
                  </NavGroup>
                ))}
              </NavPane>

              <FileList>
                <GroupHeading><Triangle dir="corner" />Dyski twarde (2)</GroupHeading>
                <Tiles>
                  <Tile type="button" $selected>
                    <Drive kind="system" />
                    <TileText>
                      Windows 7 (C:)
                      <UsageBar used={54} label="Zajęte miejsce na dysku C" />
                      <small>22,4 GB wolnych z 48,8 GB</small>
                    </TileText>
                  </Tile>
                  <Tile type="button">
                    <Drive kind="plain" />
                    <TileText>
                      Dysk lokalny (D:)
                      <UsageBar used={18} label="Zajęte miejsce na dysku D" />
                      <small>90,8 GB wolnych z 110 GB</small>
                    </TileText>
                  </Tile>
                </Tiles>
                <GroupHeading><Triangle dir="corner" />Urządzenia z wymiennymi nośnikami pamięci (2)</GroupHeading>
                <Tiles>
                  <Tile type="button">
                    <Drive kind="floppy" />
                    <TileText>Stacja dyskietek (A:)</TileText>
                  </Tile>
                  <Tile type="button">
                    <Drive kind="cd" />
                    <TileText>Stacja dysków CD (E:)</TileText>
                  </Tile>
                </Tiles>
              </FileList>
            </Panes>

            <DetailsPane>
              <BigDrive />
              <Facts>
                <Subject>Windows 7 (C:)</Subject>
                <dt>Całkowity rozmiar:</dt>
                <dd>48,8 GB</dd>
                <Subject $dim>Dysk lokalny</Subject>
                <dt>System plików:</dt>
                <dd>NTFS</dd>
                <dt>Używane miejsce:</dt>
                <dd><UsageBar used={54} label="Używane miejsce" /></dd>
                <Filler />
                <dt>Wolne miejsce:</dt>
                <dd>22,4 GB</dd>
              </Facts>
            </DetailsPane>
          </Client>
        </Window>

        <Cursor>
          <svg width="14" height="22" viewBox="0 0 14 22" aria-hidden="true">
            <path d="M1 1V17L4.800 13.500L7.500 20L10 19L7.300 12.700H12.500Z" fill="#fff" stroke="#000" />
          </svg>
        </Cursor>
      </Desktop>

      <Taskbar>
        <StartButton type="button" aria-label="Start">
          <svg width="38" height="38" viewBox="0 0 38 38">
            <circle cx="19" cy="19" r="17.500" fill="url(#orb)" stroke="#2a3e58" />
            <path d="M3 18A16 16 0 0 1 35 18Q19 24 3 18Z" fill="url(#gloss)" opacity="0.55" />
            <Flag x={8.500} y={9} s={1.080} />
          </svg>
        </StartButton>
        <Pinned type="button" aria-label="Internet Explorer">
          <svg width="34" height="34" viewBox="0 0 34 34">
            <path d="M28 22.500Q25 28 18.500 28Q9.500 27.500 9.500 18.500Q10 9.500 18.500 9Q28 9.500 27.500 19H11" fill="none" stroke="url(#ie)" strokeWidth="5" />
            <path d="M5 31Q1 28 7 18Q16 4 26 2.500Q31.500 2 30 8" fill="none" stroke="#f6c21c" strokeWidth="2.400" />
          </svg>
        </Pinned>
        <TaskButton type="button"><TaskComputerIcon />Komputer</TaskButton>
        <Pinned type="button" aria-label="Windows Media Player">
          <svg width="26" height="26" viewBox="0 0 26 26">
            <path d="M1 2H16V24H1Z" fill="#c4d6e6" stroke="#6fa5c9" />
            <path d="M18 2V24M21 2V24M24 3V23" stroke="#8fd0ea" strokeWidth="1.600" />
            <circle cx="11" cy="13" r="9" fill="#ef7d1a" stroke="#c65a08" />
            <path d="M8 7.500L17 13L8 18.500Z" fill="#fff" />
          </svg>
        </Pinned>
        <Pinned type="button" aria-label="Google Chrome">
          <svg width="32" height="32" viewBox="1 1 46 46"><ChromeMark /></svg>
        </Pinned>
        <Spacer />
        <Tray>
          <Language type="button">EN</Language>
          <TrayButton type="button" aria-label="Pokaż ukryte ikony"><Triangle dir="up" /></TrayButton>
          <TrayButton type="button" aria-label="Centrum akcji">
            <svg width="16" height="16" viewBox="0 0 16 16"><path d="M1 0.500H3V15.500H1Z" fill="#fff" stroke="#222c3c" strokeWidth="0.600" /><path d="M3.500 2Q6 1 8 2.500T14 2.500V9Q10 10 8 8.500T3.500 8.500Z" fill="#fff" stroke="#222c3c" strokeWidth="0.600" /><RedCross /></svg>
          </TrayButton>
          <TrayButton type="button" aria-label="Sieć">
            <svg width="16" height="16" viewBox="0 0 16 16"><rect x="4" y="3.500" width="11" height="8" fill="#4d5d75" stroke="#fff" strokeWidth="1.500" /><path d="M5 14.500H13M9 12V15" stroke="#fff" strokeWidth="1.500" /><path d="M1 1V4.500H4.500V1M2.700 4.500V10" stroke="#fff" strokeWidth="1.300" fill="none" /></svg>
          </TrayButton>
          <TrayButton type="button" aria-label="Głośność">
            <svg width="16" height="16" viewBox="0 0 16 16"><path d="M1 5.500H3.500L7.500 1.500V14.500L3.500 10.500H1Z" fill="#fff" stroke="#222c3c" strokeWidth="0.600" /><path d="M9.500 5Q11 8 9.500 11" stroke="#fff" fill="none" /><RedCross /></svg>
          </TrayButton>
          <Clock type="button"><span>22:37</span><span>12/04/2022</span></Clock>
          <ShowDesktop type="button" aria-label="Pokaż pulpit" />
        </Tray>
      </Taskbar>
    </Screen>
  );
}
